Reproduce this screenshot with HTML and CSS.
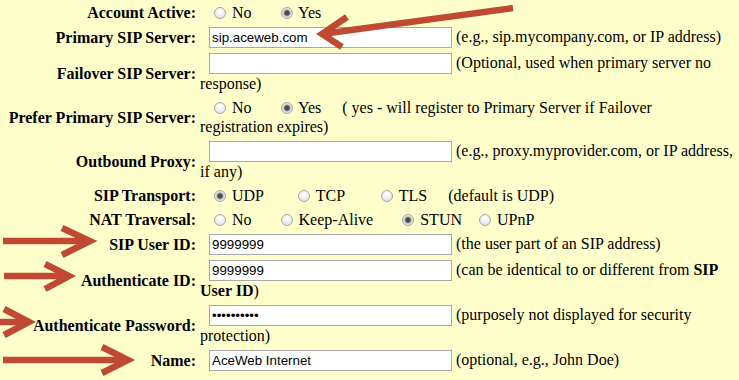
FILE: index.html
```html
<!DOCTYPE html>
<html lang="en">
<head>
    <meta charset="UTF-8">
    <meta name="viewport" content="width=device-width, initial-scale=1.0">
    <title>SIP Account Settings</title>
    <link rel="stylesheet" href="styles.css">
</head>
<body>
    <div class="page">
        <table class="settings">
            <tr>
                <td class="label">Account Active:</td>
                <td class="value">
                    <label class="opt"><input class="radio" type="radio" name="active"> No</label>
                    <label class="opt"><input class="radio" type="radio" name="active" checked> Yes</label>
                </td>
            </tr>
            <tr>
                <td class="label">Primary SIP Server:</td>
                <td class="value"><input class="text-input" type="text" value="sip.aceweb.com"> (e.g., sip.mycompany.com, or IP address)</td>
            </tr>
            <tr>
                <td class="label">Failover SIP Server:</td>
                <td class="value"><input class="text-input" type="text"> (Optional, used when primary server no response)</td>
            </tr>
            <tr>
                <td class="label">Prefer Primary SIP Server:</td>
                <td class="value">
                    <label class="opt"><input class="radio" type="radio" name="prefer"> No</label>
                    <label class="opt opt-note"><input class="radio" type="radio" name="prefer" checked> Yes</label>
                    ( yes - will register to Primary Server if Failover<br>registration expires)
                </td>
            </tr>
            <tr>
                <td class="label">Outbound Proxy:</td>
                <td class="value"><input class="text-input" type="text"> (e.g., proxy.myprovider.com, or IP address, if any)</td>
            </tr>
            <tr>
                <td class="label">SIP Transport:</td>
                <td class="value">
                    <label class="opt opt-wide"><input class="radio" type="radio" name="transport" checked> UDP</label>
                    <label class="opt opt-wider"><input class="radio" type="radio" name="transport"> TCP</label>
                    <label class="opt opt-note"><input class="radio" type="radio" name="transport"> TLS</label>
                    (default is UDP)
                </td>
            </tr>
            <tr>
                <td class="label">NAT Traversal:</td>
                <td class="value">
                    <label class="opt"><input class="radio" type="radio" name="nat"> No</label>
                    <label class="opt"><input class="radio" type="radio" name="nat"> Keep-Alive</label>
                    <label class="opt opt-tight"><input class="radio" type="radio" name="nat" checked> STUN</label>
                    <label class="opt"><input class="radio" type="radio" name="nat"> UPnP</label>
                </td>
            </tr>
            <tr>
                <td class="label">SIP User ID:</td>
                <td class="value"><input class="text-input" type="text" value="9999999"> (the user part of an SIP address)</td>
            </tr>
            <tr>
                <td class="label">Authenticate ID:</td>
                <td class="value"><input class="text-input" type="text" value="9999999"> (can be identical to or different from <b>SIP User ID</b>)</td>
            </tr>
            <tr>
                <td class="label">Authenticate Password:</td>
                <td class="value"><input class="text-input" type="password" value="secret1234"> (purposely not displayed for security protection)</td>
            </tr>
            <tr>
                <td class="label">Name:</td>
                <td class="value"><input class="text-input" type="text" value="AceWeb Internet"> (optional, e.g., John Doe)</td>
            </tr>
        </table>

        <svg class="arrows" width="739" height="380" viewBox="0 0 739 380">
            <g fill="none" stroke="#bf4a31" stroke-width="6.5" stroke-linejoin="miter">
                <!-- primary server -->
                <path d="M513 8 L322 34"/>
                <path d="M347 17 L322 34 L342 47"/>
                <!-- sip user id -->
                <path d="M3 241 H88"/>
                <path d="M62 228 L90 241 L62 255"/>
                <!-- authenticate id -->
                <path d="M4 276 H67"/>
                <path d="M45 264 L69 276 L45 289"/>
                <!-- password -->
                <path d="M0 322 H27"/>
                <path d="M4 309 L29 322 L4 335"/>
                <!-- name -->
                <path d="M3 360 H126"/>
                <path d="M102 347 L128 360 L102 373"/>
            </g>
        </svg>
    </div>
</body>
</html>
```

FILE: styles.css
```css
html,
body,
table,
td,
label {
    font-family: "Liberation Serif", "DejaVu Serif", serif;
}

body {
    margin: 0;
    background-color: #ffffcc;
    font-size: 16px;
    color: #000;
}

.page {
    position: relative;
    width: 739px;
    height: 380px;
    overflow: hidden;
}

.settings {
    width: 739px;
    margin-top: 1px;
    border-collapse: collapse;
    font-size: 16px;
}

.settings td {
    padding: 2px 0 3px;
    vertical-align: middle;
    line-height: 19px;
}

.label {
    width: 196px;
    text-align: right;
    font-weight: bold;
    white-space: nowrap;
}

.settings .value {
    padding-left: 4px;
    padding-right: 2px;
}

.text-input {
    width: 243px;
    height: 21px;
    box-sizing: border-box;
    margin: 0 0 0 9px;
    padding: 1px 2px;
    border: 1px solid #a9a9a9;
    background-color: #fff;
    color: #000;
    font-family: "Liberation Sans", Arial, sans-serif;
    font-size: 13.33px;
    outline: none;
}

.opt {
    margin-right: 25px;
}

.opt:first-child {
    margin-left: 14px;
}

.opt-wide {
    margin-right: 30px;
}

.opt-wider {
    margin-right: 32px;
}

.opt-note {
    margin-right: 17px;
}

.opt-tight {
    margin-right: 13px;
}

.radio {
    appearance: none;
    -webkit-appearance: none;
    width: 12px;
    height: 12px;
    box-sizing: border-box;
    margin: 0 2px 0 0;
    border: 1px solid #a8a8a8;
    border-radius: 50%;
    background: radial-gradient(circle at 50% 35%, #ffffff 0, #ececec 60%, #d6d6d6 100%);
    vertical-align: -1px;
}

.radio:checked {
    background: radial-gradient(circle, #4a4a4a 0, #4a4a4a 2px, #9c9c9c 3px, #dedede 4px, #f2f2f2 100%);
}

.arrows {
    position: absolute;
    top: 0;
    left: 0;
    pointer-events: none;
}
```
